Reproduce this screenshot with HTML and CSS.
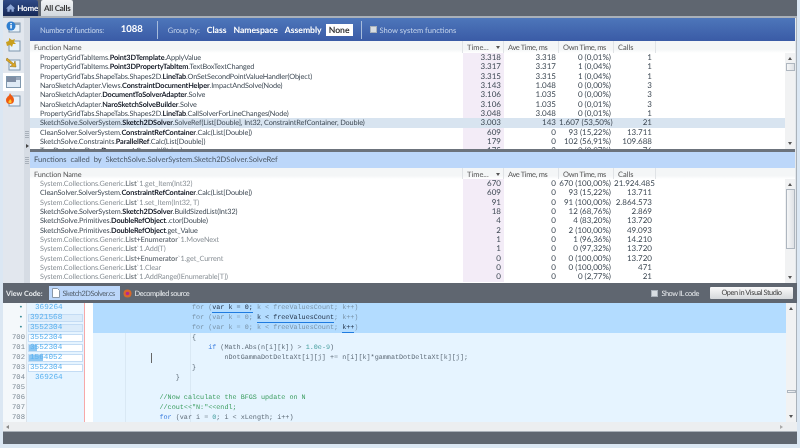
FILE: index.html
```html
<!DOCTYPE html>
<html lang="en">
<head>
    <meta charset="UTF-8">
    <title>All Calls</title>
    <link rel="stylesheet" href="styles.css">
</head>
<body>
    <div class="window">
        <div class="tabbar">
            <div class="tab tab-home">
                <svg width="10" height="10" viewBox="0 0 10 10"><path d="M5 1 0 5.500h1.500V9h2.500V6.500h2V9h2.500V5.500H10z" fill="#8fa8d8"/></svg>
                Home
            </div>
            <div class="tab tab-active">All Calls</div>
        </div>
        <div class="workspace">
            <div class="sidebar">
                <div class="side-btn">
                    <svg width="15" height="12" viewBox="0 0 15 12"><rect x="3" y="2" width="11" height="9" fill="#e8f2fb" stroke="#7f97ad"/><rect x="3" y="2" width="11" height="2" fill="#8fa6bd"/><circle cx="5" cy="5" r="4.500" fill="#2f7fd0"/><rect x="4.300" y="4" width="1.500" height="3.500" fill="#fff"/><rect x="4.300" y="2" width="1.500" height="1.300" fill="#fff"/></svg>
                </div>
                <div class="side-btn">
                    <svg width="15" height="14" viewBox="0 0 15 14"><rect x="3" y="3" width="11" height="10" fill="#e8f2fb" stroke="#7f97ad"/><path d="M0 4 3 3 3 0 6 2 9 1 8 4 10 6 7 6 6 9 4 7 1 8z" fill="#c9a020"/></svg>
                </div>
                <div class="side-btn">
                    <svg width="15" height="14" viewBox="0 0 15 14"><rect x="3" y="3" width="11" height="10" fill="#e8f2fb" stroke="#7f97ad"/><path d="M1 1 8 7 9 4 10 10 4 9.500 6.500 8 0 3z" fill="#e0a820" stroke="#8a6a10" stroke-width=".5"/></svg>
                </div>
                <div class="side-btn side-btn-active">
                    <svg width="15" height="12" viewBox="0 0 15 12"><rect x=".5" y=".5" width="14" height="11" fill="#dfeaf5" stroke="#7f97ad"/><rect x="1" y="1" width="9" height="5" fill="#7f8da3"/><rect x="10" y="1" width="4" height="3" fill="#9aa8bb"/></svg>
                </div>
                <div class="side-btn">
                    <svg width="15" height="14" viewBox="0 0 15 14"><rect x="3" y="3" width="11" height="10" fill="#e8f2fb" stroke="#7f97ad"/><path d="M4 0C5 3 8 3 8 7 8 10 6 11 4 11 2 11 0 10 0 7 0 5 1 5 2 3 3 4 3 2 4 0z" fill="#ee5a12"/><path d="M4 6C5 7 6 8 5.500 9.500 5 10.500 3 10.500 2.500 9.500 2 8 3.500 8 4 6z" fill="#ffc62a"/></svg>
                </div>
            </div>
            <div class="side-split">
                <span class="grip"></span>
                <span class="side-arrow"></span>
                <span class="grip"></span>
            </div>
            <div class="main">
                <div class="summary">
                    <span class="sum-label sum-total">Number of functions:</span>
                    <span class="sum-count">1088</span>
                    <span class="sum-sep"></span>
                    <span class="sum-label sum-group">Group by:</span>
                    <span class="group-opt">Class</span>
                    <span class="group-opt">Namespace</span>
                    <span class="group-opt">Assembly</span>
                    <span class="group-opt group-on">None</span>
                    <span class="sum-sep sep-wide"></span>
                    <span class="check"></span>
                    <span class="sum-label">Show system functions</span>
                </div>

                <div class="grid grid-top">
                    <div class="row head">
                        <div class="c-name">Function Name</div>
                        <div class="c-time">Time... <i class="sort"></i></div>
                        <div class="c-ave">Ave Time, ms</div>
                        <div class="c-own">Own Time, ms</div>
                        <div class="c-calls">Calls</div>
                        <div class="c-rest"></div>
                    </div>
                    <div class="body">
                        <div class="rows">
                            <div class="row"><div class="c-name">PropertyGridTabItems.<b>Point3DTemplate</b>.ApplyValue</div><div class="c-time">3.318</div><div class="c-ave">3.318</div><div class="c-own">0 (0,01%)</div><div class="c-calls">1</div></div>
                            <div class="row"><div class="c-name">PropertyGridTabItems.<b>Point3DPropertyTabItem</b>.TextBoxTextChanged</div><div class="c-time">3.317</div><div class="c-ave">3.317</div><div class="c-own">1 (0,04%)</div><div class="c-calls">1</div></div>
                            <div class="row"><div class="c-name">PropertyGridTabs.ShapeTabs.Shapes2D.<b>LineTab</b>.OnSetSecondPointValueHandler(Object)</div><div class="c-time">3.315</div><div class="c-ave">3.315</div><div class="c-own">1 (0,04%)</div><div class="c-calls">1</div></div>
                            <div class="row"><div class="c-name">NaroSketchAdapter.Views.<b>ConstraintDocumentHelper</b>.ImpactAndSolve(Node)</div><div class="c-time">3.143</div><div class="c-ave">1.048</div><div class="c-own">0 (0,00%)</div><div class="c-calls">3</div></div>
                            <div class="row"><div class="c-name">NaroSketchAdapter.<b>DocumentToSolverAdapter</b>.Solve</div><div class="c-time">3.106</div><div class="c-ave">1.035</div><div class="c-own">0 (0,00%)</div><div class="c-calls">3</div></div>
                            <div class="row"><div class="c-name">NaroSketchAdapter.<b>NaroSketchSolveBuilder</b>.Solve</div><div class="c-time">3.106</div><div class="c-ave">1.035</div><div class="c-own">0 (0,01%)</div><div class="c-calls">3</div></div>
                            <div class="row"><div class="c-name">PropertyGridTabs.ShapeTabs.Shapes2D.<b>LineTab</b>.CallSolverForLineChanges(Node)</div><div class="c-time">3.048</div><div class="c-ave">3.048</div><div class="c-own">0 (0,01%)</div><div class="c-calls">1</div></div>
                            <div class="row selected"><div class="c-name">SketchSolve.SolverSystem.<b>Sketch2DSolver</b>.SolveRef(List[Double], Int32, ConstraintRefContainer, Double)</div><div class="c-time">3.003</div><div class="c-ave">143</div><div class="c-own">1.607 (53,50%)</div><div class="c-calls">21</div></div>
                            <div class="row"><div class="c-name">CleanSolver.SolverSystem.<b>ConstraintRefContainer</b>.Calc(List[Double])</div><div class="c-time">609</div><div class="c-ave">0</div><div class="c-own">93 (15,22%)</div><div class="c-calls">13.711</div></div>
                            <div class="row"><div class="c-name">SketchSolve.Constraints.<b>ParallelRef</b>.Calc(List[Double])</div><div class="c-time">179</div><div class="c-ave">0</div><div class="c-own">102 (56,91%)</div><div class="c-calls">109.688</div></div>
                            <div class="row"><div class="c-name">TreeData.NaroData.<b>Document</b>.Commit(String)</div><div class="c-time">175</div><div class="c-ave">3</div><div class="c-own">0 (0,07%)</div><div class="c-calls">76</div></div>
                        </div>
                        <div class="vscroll">
                            <span class="arrow up"></span>
                            <span class="thumb thumb-top"></span>
                            <span class="arrow down"></span>
                        </div>
                    </div>
                </div>

                <div class="splitter"></div>
                <div class="called-title">Functions &nbsp;called &nbsp;by &nbsp;SketchSolve.SolverSystem.Sketch2DSolver.SolveRef</div>

                <div class="grid grid-bottom">
                    <div class="row head">
                        <div class="c-name">Function Name</div>
                        <div class="c-time">Time... <i class="sort"></i></div>
                        <div class="c-ave">Ave Time, ms</div>
                        <div class="c-own">Own Time, ms</div>
                        <div class="c-calls">Calls</div>
                        <div class="c-rest"></div>
                    </div>
                    <div class="body">
                        <div class="rows">
                            <div class="row sys"><div class="c-name">System.Collections.Generic.<b>List</b>`1.get_Item(Int32)</div><div class="c-time">670</div><div class="c-ave">0</div><div class="c-own">670 (100,00%)</div><div class="c-calls">21.924.485</div></div>
                            <div class="row"><div class="c-name">CleanSolver.SolverSystem.<b>ConstraintRefContainer</b>.Calc(List[Double])</div><div class="c-time">609</div><div class="c-ave">0</div><div class="c-own">93 (15,22%)</div><div class="c-calls">13.711</div></div>
                            <div class="row sys"><div class="c-name">System.Collections.Generic.<b>List</b>`1.set_Item(Int32, T)</div><div class="c-time">91</div><div class="c-ave">0</div><div class="c-own">91 (100,00%)</div><div class="c-calls">2.864.573</div></div>
                            <div class="row"><div class="c-name">SketchSolve.SolverSystem.<b>Sketch2DSolver</b>.BuildSizedList(Int32)</div><div class="c-time">18</div><div class="c-ave">0</div><div class="c-own">12 (68,76%)</div><div class="c-calls">2.869</div></div>
                            <div class="row"><div class="c-name">SketchSolve.Primitives.<b>DoubleRefObject</b>..ctor(Double)</div><div class="c-time">4</div><div class="c-ave">0</div><div class="c-own">4 (83,20%)</div><div class="c-calls">13.720</div></div>
                            <div class="row"><div class="c-name">SketchSolve.Primitives.<b>DoubleRefObject</b>.get_Value</div><div class="c-time">2</div><div class="c-ave">0</div><div class="c-own">2 (100,00%)</div><div class="c-calls">49.093</div></div>
                            <div class="row sys"><div class="c-name">System.Collections.Generic.<b>List+Enumerator</b>`1.MoveNext</div><div class="c-time">1</div><div class="c-ave">0</div><div class="c-own">1 (96,36%)</div><div class="c-calls">14.210</div></div>
                            <div class="row sys"><div class="c-name">System.Collections.Generic.<b>List</b>`1.Add(T)</div><div class="c-time">1</div><div class="c-ave">0</div><div class="c-own">0 (97,32%)</div><div class="c-calls">13.720</div></div>
                            <div class="row sys"><div class="c-name">System.Collections.Generic.<b>List+Enumerator</b>`1.get_Current</div><div class="c-time">0</div><div class="c-ave">0</div><div class="c-own">0 (100,00%)</div><div class="c-calls">13.720</div></div>
                            <div class="row sys"><div class="c-name">System.Collections.Generic.<b>List</b>`1.Clear</div><div class="c-time">0</div><div class="c-ave">0</div><div class="c-own">0 (100,00%)</div><div class="c-calls">471</div></div>
                            <div class="row sys"><div class="c-name">System.Collections.Generic.<b>List</b>`1.AddRange(IEnumerable[T])</div><div class="c-time">0</div><div class="c-ave">0</div><div class="c-own">0 (2,77%)</div><div class="c-calls">21</div></div>
                        </div>
                        <div class="vscroll">
                            <span class="arrow up"></span>
                            <span class="thumb thumb-bottom"></span>
                            <span class="arrow down"></span>
                        </div>
                    </div>
                </div>
            </div>
        </div>

        <div class="codebar">
            <span class="code-label">View Code:</span>
            <span class="code-tab code-tab-on">
                <svg width="8" height="10" viewBox="0 0 8 10"><path d="M.5.5h5l2 2v7h-7z" fill="#fff" stroke="#8a98a8"/></svg>
                Sketch2DSolver.cs
            </span>
            <span class="code-tab">
                <svg width="9" height="9" viewBox="0 0 9 9"><circle cx="4.500" cy="4.500" r="4" fill="#d8682a"/><circle cx="4.500" cy="4.500" r="1.800" fill="#b02a90"/></svg>
                Decompiled source
            </span>
            <span class="code-spacer"></span>
            <span class="check"></span>
            <span class="code-check-label">Show IL code</span>
            <span class="vs-btn">Open in Visual Studio</span>
        </div>

        <div class="source">
            <div class="linenos">
                <div class="dot">&bull;</div><div class="dot">&bull;</div><div class="dot">&bull;</div>
                <div>700</div><div>701</div><div>702</div><div>703</div><div>704</div><div>705</div><div>706</div><div>707</div><div>708</div>
            </div>
            <div class="hits">
                <div class="hit">369264</div>
                <div class="hit hit-box hit-fill">3921568</div>
                <div class="hit hit-box hit-fill">3552304</div>
                <div class="hit hit-box">3552304</div>
                <div class="hit hit-box hit-bar-a">3552304</div>
                <div class="hit hit-box hit-bar-b">1564052</div>
                <div class="hit hit-box">3552304</div>
                <div class="hit">369264</div>
            </div>
            <div class="code">
                <div class="line hl"><span class="dim">                        for (<u>var k = 0;</u> k &lt; freeValuesCount; k++)</span></div>
                <div class="line hl"><span class="dim">                        for (var k = 0; <u>k &lt; freeValuesCount</u>; k++)</span></div>
                <div class="line hl"><span class="dim">                        for (var k = 0; k &lt; freeValuesCount; <u>k++</u>)</span></div>
                <div class="line">                        {</div>
                <div class="line">                            <span class="kw">if</span> (Math.Abs(n[i][k]) &gt; <span class="num">1.0e-9</span>)</div>
                <div class="line">                                nDotGammaDotDeltaXt[i][j] += n[i][k]*gammatDotDeltaXt[k][j];<i class="caret"></i></div>
                <div class="line">                        }</div>
                <div class="line">                    }</div>
                <div class="line"></div>
                <div class="line">                <span class="cm">//Now calculate the BFGS update on N</span></div>
                <div class="line">                <span class="cm">//cout&lt;&lt;"N:"&lt;&lt;endl;</span></div>
                <div class="line">                <span class="kw">for</span> (var i = <span class="num">0</span>; i &lt; xLength; i++)</div>
            </div>
            <div class="vscroll code-scroll">
                <span class="arrow up"></span>
                <span class="thumb thumb-code"></span>
                <span class="arrow down"></span>
            </div>
        </div>
        <div class="hscroll">
            <span class="arrow left"></span>
            <span class="arrow right"></span>
        </div>
        <div class="footer"></div>
    </div>
</body>
</html>
```
FILE: styles.css
```css
* {
    box-sizing: border-box;
}
html, body {
    margin: 0;
    height: 100%;
    overflow: hidden;
    background: #dbe7f3;
}
body {
    font-family: Lato, "Liberation Sans", sans-serif;
    font-size: 8px;
    color: #3f4a55;
    text-rendering: geometricPrecision;
}
.window {
    width: 800px;
    height: 448px;
    padding: 0 3px 4px 3px;
    display: flex;
    flex-direction: column;
    filter: blur(0.3px);
}

/* tabs */
.tabbar {
    height: 16px;
    background: #5f6670;
    display: flex;
    align-items: flex-end;
    flex: none;
    gap: 3px;
}
.tab {
    height: 16px;
    display: flex;
    align-items: center;
    gap: 2px;
    font-weight: bold;
    font-size: 8px;
    letter-spacing: -0.2px;
    white-space: nowrap;
    border-radius: 2px 2px 0 0;
}
.tab-home {
    width: 35px;
    padding-left: 3px;
    color: #fff;
    background: linear-gradient(#2f4a86, #172a58);
}
.tab-active {
    width: 32px;
    padding-left: 3px;
    color: #333;
    background: linear-gradient(#f2f4f6, #d2d8de);
}

.workspace {
    height: 267px;
    flex: none;
    display: flex;
    border-top: 2px solid #a9b0b8;
    background: #dfe5ec;
}
.sidebar {
    width: 21px;
    flex: none;
    background: #e2e7ee;
}
.side-btn {
    height: 18.300px;
    display: flex;
    align-items: center;
    justify-content: center;
}
.side-btn-active {
    background: #fff;
}
.side-split {
    width: 6px;
    flex: none;
    display: flex;
    flex-direction: column;
    align-items: center;
    gap: 6px;
    padding-top: 113px;
    background: #d6dce4;
}
.grip {
    width: 4px;
    height: 7px;
    flex: none;
    background: repeating-linear-gradient(#a8b0ba 0 1px, transparent 1px 2px);
}
.side-arrow {
    order: 1;
    width: 0;
    height: 0;
    flex: none;
    border: 2.500px solid transparent;
    border-left: 3px solid #444;
    border-right: 0;
}
.side-split .grip:last-child {
    order: 2;
    margin-top: 3px;
}
.main {
    flex: 1;
    min-width: 0;
    display: flex;
    flex-direction: column;
    background: #e4e8ec;
    padding-right: 1px;
    border-right: 1px solid #aab2ba;
}

/* blue summary strip */
.summary {
    height: 23px;
    flex: none;
    display: flex;
    align-items: center;
    padding-left: 10px;
    font-size: 7.600px;
    background: linear-gradient(#4d76ba, #3a5ba6);
}
.sum-label {
    color: #c2d2ea;
}
.sum-total {
    letter-spacing: -0.350px;
}
.sum-group {
    letter-spacing: -0.100px;
}
.sum-count {
    color: #fff;
    font-weight: bold;
    font-size: 9.500px;
    margin-left: 17px;
}
.sum-sep {
    width: 1px;
    height: 18px;
    margin: 0 10px 0 14px;
    background: #a7bcdc;
}
.sep-wide {
    margin: 0 8px 0 8px;
}
.group-opt {
    color: #fff;
    font-weight: bold;
    font-size: 8.600px;
    margin-left: 7px;
}
.group-opt.group-on {
    margin-left: 4px;
    padding: 1px 3px;
    color: #333;
    background: #fff;
}
.check {
    width: 7px;
    height: 7px;
    margin-right: 3px;
    flex: none;
    background: #d8dde2;
    border: 1px solid #aab2bb;
}

/* tables */
.grid {
    display: flex;
    flex-direction: column;
    overflow: hidden;
}
.grid-top {
    height: 108px;
    flex: none;
}
.grid-bottom {
    height: 115px;
    flex: none;
}
.row {
    display: flex;
    height: 9.340px;
    line-height: 9.340px;
    white-space: nowrap;
}
.head {
    height: 12px;
    line-height: 14px;
    flex: none;
    color: #555;
    font-size: 7.500px;
    background: linear-gradient(#f4f6f7 70%, #ffffff);
}
.grid-bottom .head {
    height: 11px;
    line-height: 13px;
}
.head > div {
    background: none;
    border-right: 1px solid #e0e3e6;
    text-align: left;
    padding: 0 0 0 4px;
    font-weight: normal;
}
.head .c-ave, .head .c-own {
    letter-spacing: -0.350px;
}
.head .c-rest {
    border: 0;
}
.c-name {
    width: 433px;
    padding-left: 10px;
    font-size: 7.300px;
    letter-spacing: -0.110px;
    overflow: hidden;
}
.c-name b {
    color: #141a26;
}
.c-time {
    width: 41px;
    padding-right: 3px;
    text-align: right;
    background: #f3ecf7;
}
.c-ave {
    width: 55px;
    padding-right: 3px;
    text-align: right;
}
.c-own {
    width: 55px;
    padding-right: 3px;
    text-align: right;
}
.c-calls {
    width: 42px;
    padding-right: 4px;
    text-align: right;
}
.sort {
    display: inline-block;
    margin-left: 5px;
    vertical-align: 1px;
    border: 2.500px solid transparent;
    border-top: 3px solid #555;
    border-bottom: 0;
}
.body {
    flex: 1;
    display: flex;
    min-height: 0;
    background: #fff;
}
.rows {
    flex: 1;
    overflow: hidden;
}
.selected {
    background: #d8e4f0;
}
.selected .c-time {
    background: #d8e4f0;
}
.sys .c-name {
    color: #8a9197;
}
.sys .c-name b {
    color: #767d83;
}

.vscroll {
    width: 10px;
    flex: none;
    display: flex;
    flex-direction: column;
    align-items: center;
    background: #f1f2f3;
    padding: 4px 0;
}
.code-scroll {
    width: 11px;
    border-right: 1px solid #aab2ba;
}
.arrow {
    width: 0;
    height: 0;
    flex: none;
    border: 2px solid transparent;
}
.arrow.up {
    border-top: 0;
    border-bottom: 3px solid #555;
}
.arrow.down {
    border-bottom: 0;
    border-top: 3px solid #555;
    margin-top: auto;
}
.arrow.left {
    border-left: 0;
    border-right: 3px solid #888;
}
.arrow.right {
    border-right: 0;
    border-left: 3px solid #aaa;
    margin-left: auto;
}
.thumb {
    width: 9px;
    flex: none;
    border: 1px solid #aeb6bf;
    background: linear-gradient(90deg, #f5f6f7, #dfe2e6);
}
.thumb-top {
    height: 8px;
    margin-top: 3px;
}
.thumb-bottom {
    height: 60px;
    margin-top: 3px;
}
.thumb-code {
    height: 3px;
    margin-top: 80px;
}

.splitter {
    height: 3px;
    flex: none;
    background: #6c737c;
}
.called-title {
    height: 16px;
    line-height: 15px;
    flex: none;
    padding-left: 4px;
    font-size: 7.600px;
    color: #4c5865;
    background: #bcd7fa;
}

/* code view */
.codebar {
    height: 20px;
    flex: none;
    display: flex;
    align-items: center;
    padding-left: 3px;
    font-size: 7.400px;
    letter-spacing: -0.450px;
    color: #fff;
    background: #5f6670;
}
.code-label {
    font-size: 7.200px;
    letter-spacing: 0;
    font-weight: bold;
    margin-right: 6px;
    color: #e8ebee;
}
.code-tab {
    height: 14px;
    display: flex;
    align-items: center;
    gap: 3px;
    padding: 0 3px;
    color: #e8ebee;
    white-space: nowrap;
}
.code-tab-on {
    width: 71px;
    color: #55616e;
    background: #bcd7fa;
}
.code-spacer {
    flex: 1;
}
.code-check-label {
    margin-right: 11px;
    color: #e8ebee;
}
.vs-btn {
    width: 83px;
    height: 12px;
    margin-right: 4px;
    line-height: 12px;
    text-align: center;
    color: #444;
    background: linear-gradient(#fafafa, #d5d8db);
    border-radius: 1px;
}
.source {
    height: 119px;
    flex: none;
    display: flex;
    background: #fff;
    overflow: hidden;
}
.linenos {
    width: 24px;
    flex: none;
    padding-right: 1px;
    text-align: right;
    color: #7f8b96;
    background: #f4f8fb;
    border-right: 1px solid #dce3ea;
    font-family: "Liberation Mono", monospace;
    font-size: 7.200px;
}
.linenos div {
    height: 10px;
    line-height: 10px;
}
.linenos .dot {
    color: #3f8f9a;
    padding-right: 2px;
}
.hits {
    width: 58px;
    flex: none;
    display: flex;
    flex-direction: column;
    background: #e6f4ff;
    border-right: 1px solid #f7a8a8;
    margin-right: 8px;
    color: #5cb2f0;
}
.hit {
    height: 10px;
    line-height: 10px;
    padding-left: 8px;
    font-family: "Liberation Mono", monospace;
    font-size: 7.700px;
}
.hit-box {
    padding-left: 1px;
    background: #fff;
    border: 1px solid #c4dcf4;
    line-height: 6px;
    height: 8px;
    margin: 1px 1px 1px 1px;
}
.hit-fill {
    background: #dcecfa;
}
.hit-bar-a {
    background: linear-gradient(90deg, #8cc6f2 8px, #fff 8px);
}
.hit-bar-b {
    background: linear-gradient(90deg, #8cc6f2 14px, #fff 14px);
}
.code {
    flex: 1;
    font-family: "Liberation Mono", monospace;
    font-size: 6.780px;
    color: #5f6c78;
    background-color: #e6f4ff;
    background-image: repeating-linear-gradient(90deg, transparent 0 16px, #d9e8f4 16px 16.300px);
    background-size: 100px 100%;
    background-repeat: no-repeat;
    overflow: hidden;
}
.line {
    position: relative;
    height: 10px;
    line-height: 10px;
    padding-left: 1.500px;
    white-space: pre;
}
.hl {
    background: #b3dcff;
}
.dim {
    color: #7a93a8;
}
.dim u {
    color: #24344a;
    text-decoration: none;
    border-bottom: 1px solid #1f7be0;
}
.kw {
    color: #3e7fe0;
}
.num {
    color: #4aa0a0;
}
.cm {
    color: #3f9f62;
}
.caret {
    position: absolute;
    left: 58px;
    top: 0;
    width: 1px;
    height: 10px;
    background: #666;
}
.hscroll {
    height: 9px;
    flex: none;
    display: flex;
    align-items: center;
    padding: 0 14px 0 3px;
    background: #eceef0;
}
.footer {
    flex: 1;
    background: #5f6670;
    border-top: 1px solid #a9b0b8;
}
```
